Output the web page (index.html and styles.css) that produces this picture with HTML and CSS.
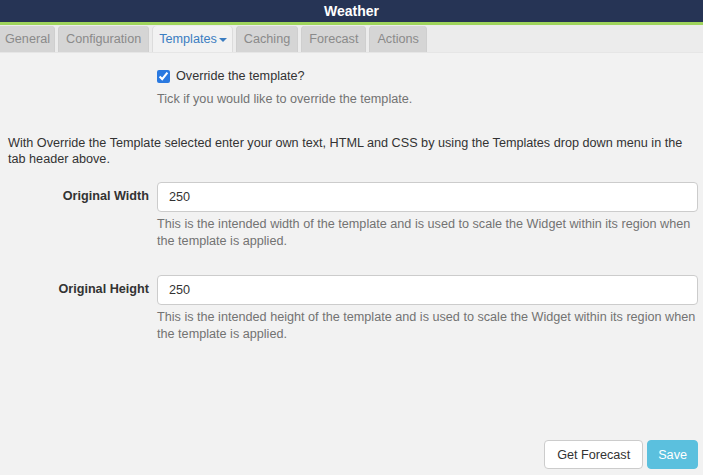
FILE: index.html
```html
<!DOCTYPE html>
<html>
<head>
<meta charset="utf-8">
<link rel="stylesheet" href="styles.css">
</head>
<body>
<div class="page">
  <header class="title-bar">Weather</header>
  <nav class="tabs">
    <span class="tab first">General</span>
    <span class="tab">Configuration</span>
    <span class="tab active">Templates<span class="caret"></span></span>
    <span class="tab">Caching</span>
    <span class="tab">Forecast</span>
    <span class="tab">Actions</span>
  </nav>
  <main class="content">
    <div class="row check-row">
      <div class="label-col"></div>
      <div class="field-col">
        <label class="check"><input type="checkbox" checked> Override the template?</label>
        <div class="help">Tick if you would like to override the template.</div>
      </div>
    </div>
    <p class="intro">With Override the Template selected enter your own text, HTML and CSS by using the Templates drop down menu in the tab header above.</p>
    <div class="row field-row">
      <label class="label-col field-label">Original Width</label>
      <div class="field-col">
        <input class="text-input" type="text" value="250">
        <div class="help">This is the intended width of the template and is used to scale the Widget within its region when the template is applied.</div>
      </div>
    </div>
    <div class="row field-row second">
      <label class="label-col field-label">Original Height</label>
      <div class="field-col">
        <input class="text-input" type="text" value="250">
        <div class="help">This is the intended height of the template and is used to scale the Widget within its region when the template is applied.</div>
      </div>
    </div>
  </main>
  <footer class="actions">
    <button class="btn btn-default">Get Forecast</button>
    <button class="btn btn-info">Save</button>
  </footer>
</div>
</body>
</html>
```

FILE: styles.css
```css
* { box-sizing: border-box; }
html, body { margin: 0; padding: 0; }
body {
  background: #f2f2f2;
  font-family: "Liberation Sans", Arial, sans-serif;
  font-size: 12.65px;
  line-height: 17px;
  color: #333;
}
.page {
  display: flex;
  flex-direction: column;
  min-height: 475px;
}
.title-bar {
  background: #263455;
  color: #fff;
  font-weight: bold;
  font-size: 14px;
  height: 25px;
  line-height: 22px;
  text-align: center;
  border-bottom: 3px solid #9fd45c;
}
.tabs {
  display: flex;
  gap: 3px;
  height: 28px;
  background: #ececec;
  border-bottom: 1px solid #e6e6e6;
  padding-top: 1px;
}
.tab {
  background: #d5d5d5;
  color: #8a8a8a;
  padding: 1px 8px 0;
  line-height: 25px;
  border-radius: 4px 4px 0 0;
  box-shadow: inset 1px 0 0 #cfcfcf, inset -1px 0 0 #cfcfcf;
}
.tab.first { padding-left: 5px; border-radius: 0 4px 0 0; width: 55px; box-shadow: inset -1px 0 0 #cfcfcf; }
.tab.active {
  background: #f2f2f2;
  color: #3b7dc1;
  padding: 1px 6px 1px 7px;
  box-shadow: inset 1px 0 0 #dcdcdc, inset -1px 0 0 #dcdcdc;
}
.caret {
  display: inline-block;
  width: 0; height: 0;
  margin-left: 2px;
  vertical-align: middle;
  border-top: 4px solid #3b7dc1;
  border-left: 4px solid transparent;
  border-right: 4px solid transparent;
}
.content { padding: 0 5px 0 8px; }
.row { display: flex; }
.label-col { width: 149px; flex: none; }
.field-col { flex: 1; }
.check-row { margin-top: 15px; }
.check {
  display: flex;
  align-items: center;
  gap: 6px;
  color: #333;
  height: 17px;
}
.check input { margin: 0; width: 13px; height: 13px; accent-color: #2a79e0; }
.help { color: #737373; margin-top: 6px; }
.intro { margin: 27px 0 0 0; line-height: 16px; }
.field-row { margin-top: 15px; }
.field-row.second { margin-top: 25px; }
.field-label {
  font-weight: bold;
  text-align: right;
  padding-top: 6px;
  color: #333;
  width: 141px;
  margin-right: 8px;
}
.text-input {
  display: block;
  width: 100%;
  height: 30px;
  border: 1px solid #ccc;
  border-radius: 4px;
  background: #fff;
  padding: 0 11px;
  font-family: inherit;
  font-size: 12.65px;
  color: #333;
}
.field-row .help { margin-top: 4px; }
.actions {
  margin-top: auto;
  display: flex;
  justify-content: flex-end;
  gap: 4px;
  padding: 0 5px 6px 0;
}
.btn {
  height: 29px;
  font-family: inherit;
  font-size: 12.65px;
  border-radius: 4px;
  padding: 0 12px;
  border: 1px solid #ccc;
}
.btn-default { background: #fff; color: #333; }
.btn-info { background: #5bc0de; border-color: #5bc0de; color: #fff; padding: 0 10px; }
```
